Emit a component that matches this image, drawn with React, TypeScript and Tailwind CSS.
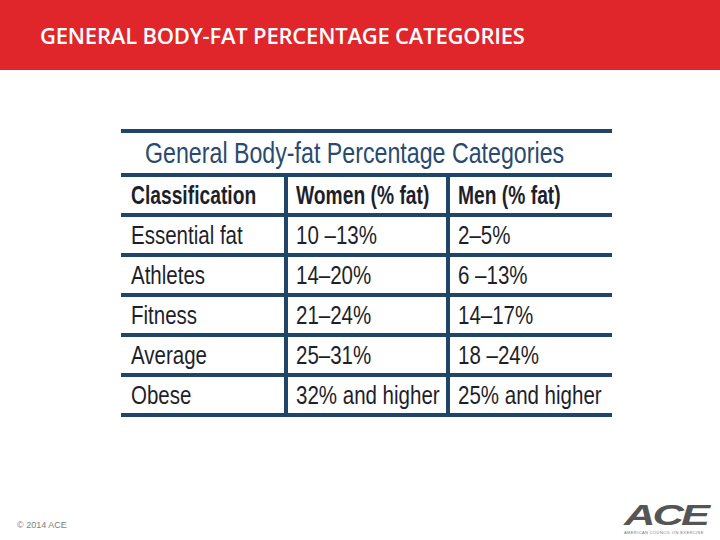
import React from 'react';

const rows = [
  ['Essential fat', '10 –13%', '2–5%'],
  ['Athletes', '14–20%', '6 –13%'],
  ['Fitness', '21–24%', '14–17%'],
  ['Average', '25–31%', '18 –24%'],
  ['Obese', '32% and higher', '25% and higher'],
];

function Cond({ children, bold }: { children: React.ReactNode; bold?: boolean }) {
  return (
    <span
      className={
        bold
          ? 'inline-block origin-left scale-x-[0.77] whitespace-nowrap font-bold text-[25px] leading-none'
          : 'inline-block origin-left scale-x-[0.82] whitespace-nowrap text-[25px] leading-none'
      }
    >
      {children}
    </span>
  );
}

function Row({ cells, bold }: { cells: string[]; bold?: boolean }) {
  return (
    <div className="flex h-[36px] border-b-4 border-[#1f4568] box-content">
      <div className="w-[163px] shrink-0 pl-[10px] flex items-center">
        <Cond bold={bold}>{cells[0]}</Cond>
      </div>
      <div className="w-[162px] shrink-0 border-l-4 border-[#1f4568] pl-[8px] flex items-center">
        <Cond bold={bold}>{cells[1]}</Cond>
      </div>
      <div className="w-[166px] shrink-0 border-l-4 border-[#1f4568] pl-[8px] flex items-center">
        <Cond bold={bold}>{cells[2]}</Cond>
      </div>
    </div>
  );
}

export default function App() {
  return (
    <div className="relative w-[720px] h-[540px] bg-white flex flex-col overflow-hidden">
      <div className="h-[70px] bg-[#e0262b] pl-[40px] pt-[20px]">
        <h1 className="text-white text-[22px] leading-[30px] font-semibold tracking-[-0.2px] font-['Open_Sans',sans-serif]">
          GENERAL BODY-FAT PERCENTAGE CATEGORIES
        </h1>
      </div>

      <div className="ml-[121px] mt-[59px] w-[491px] border-t-4 border-[#1f4568] font-['Liberation_Sans',Arial,sans-serif] text-[#1e1f2b]">
        <div className="h-[40px] border-b-4 border-[#1f4568] box-content pl-[24px] flex items-center">
          <span className="inline-block origin-left scale-x-[0.8] whitespace-nowrap text-[29px] leading-none text-[#2a4a6e]">
            General Body-fat Percentage Categories
          </span>
        </div>
        <Row cells={['Classification', 'Women (% fat)', 'Men (% fat)']} bold />
        {rows.map((r, i) => (
          <Row key={i} cells={r} />
        ))}
      </div>

      <div className="mt-auto flex items-end justify-between pl-[17px] pr-[10px] pb-[5px]">
        <span className="text-[9px] text-[#808080] font-['Liberation_Sans',Arial,sans-serif] mb-[3px]">
          © 2014 ACE
        </span>
        <div className="flex flex-col items-start w-[86px]">
          <span className="inline-block origin-left scale-x-[1.45] italic font-black text-[30px] leading-[30px] tracking-[-2px] text-[#555555] font-['Liberation_Sans',Arial,sans-serif]">
            ACE
          </span>
          <span className="text-[4px] leading-[5px] tracking-[0.4px] whitespace-nowrap text-[#777] font-['Liberation_Sans',Arial,sans-serif]">
            AMERICAN COUNCIL ON EXERCISE
          </span>
        </div>
      </div>
    </div>
  );
}
